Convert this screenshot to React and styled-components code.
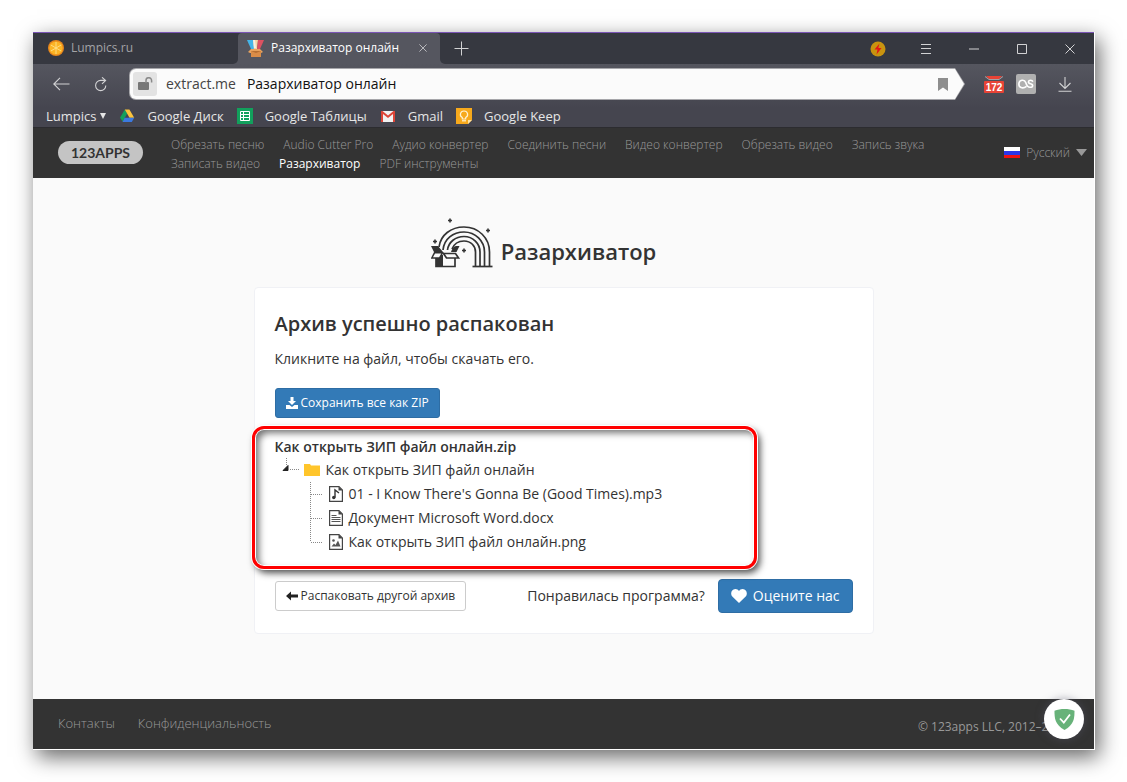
import React from "react";
import styled, { createGlobalStyle } from "styled-components";

const GlobalStyle = createGlobalStyle`
  *, *::before, *::after { box-sizing: border-box; }
  body {
    margin: 0;
    background: #fff;
    color: #333;
    font-family: "Open Sans", "Noto Sans", sans-serif;
    font-size: 14px;
    line-height: 20px;
  }
  button, input { font: inherit; color: inherit; }
  h1, h2, p, ul { margin: 0; padding: 0; }
  ul { list-style: none; }
  a { color: inherit; text-decoration: none; }
  svg { display: block; flex: none; }
`;

const Desktop = styled.div`
  display: flex;
  min-height: 100vh;
  padding: 32px 32px 32px 33px;
`;

const BrowserWindow = styled.div`
  flex: 1;
  min-width: 0;
  display: flex;
  flex-direction: column;
  background: #fafafa;
  border: solid #fff;
  border-width: 0 1px 1px 0;
  box-shadow: 4px 7px 20px rgba(0, 0, 0, 0.6);
`;

/* Browser chrome */

const TabStrip = styled.div`
  display: flex;
  height: 32px;
  background: linear-gradient(#363840 50%, #55565f 50%);
  border-top: 1px solid #7a55b5;
`;

const Tab = styled.div`
  display: flex;
  align-items: center;
  gap: 7px;
  width: ${(p) => (p.$active ? "202px" : "205px")};
  padding: 0 9px 1px ${(p) => (p.$active ? "9px" : "15px")};
  border-radius: ${(p) => (p.$active ? "4px 4px 0 0" : "0 0 5px 0")};
  background: ${(p) => (p.$active ? "#55565f" : "#363840")};
  color: ${(p) => (p.$active ? "#fff" : "#a3a3a6")};
  font-size: 12px;
  font-weight: ${(p) => (p.$active ? 500 : 400)};
  white-space: nowrap;
`;

const TabTitle = styled.span`
  flex: 1;
`;

const StripRest = styled.div`
  flex: 1;
  display: flex;
  justify-content: space-between;
  background: #363840;
  border-radius: 0 0 0 5px;
`;

const ChromeButton = styled.button`
  display: flex;
  align-items: center;
  justify-content: center;
  width: ${(p) => p.$width || 40}px;
  padding: 0;
  border: 0;
  background: none;
  color: #d2d2d4;
`;

const WindowControls = styled.div`
  display: flex;
`;

const ChromeBody = styled.div`
  background: linear-gradient(#55565f, #45454f 70%);
  border-bottom: 1px solid #2c2c30;
`;

const Toolbar = styled.div`
  display: flex;
  align-items: center;
  height: 40px;
  padding-left: 8px;
`;

const AddressFrame = styled.div`
  flex: 1;
  height: 32px;
  margin: 0 9px 0 8px;
  padding: 1px;
  background: #a6a6aa;
  border-radius: 7px;
  clip-path: polygon(0 0, calc(100% - 10px) 0, 100% 50%, calc(100% - 10px) 100%, 0 100%);
`;

const AddressField = styled.div`
  display: flex;
  align-items: center;
  height: 100%;
  padding: 0 16px 0 3px;
  background: #fbfbfb;
  border-radius: 6px;
  clip-path: polygon(0 0, calc(100% - 9px) 0, 100% 50%, calc(100% - 9px) 100%, 0 100%);
  font-size: 14px;
`;

const LockButton = styled.button`
  display: flex;
  align-items: center;
  justify-content: center;
  width: 24px;
  height: 24px;
  padding: 0;
  border: 0;
  border-radius: 3px;
  background: #e3e3e3;
`;

const Host = styled.label`
  margin: 0 11px 0 9px;
  color: #444;
`;

const AddressInput = styled.input`
  flex: 1;
  min-width: 0;
  padding: 0;
  border: 0;
  outline: 0;
  background: none;
  color: #111;
`;

const BareButton = styled.button`
  padding: 0;
  border: 0;
  background: none;
`;

const Extensions = styled.div`
  display: flex;
  align-items: center;
  gap: 12px;
  margin-left: 10px;
`;

const Bookmarks = styled.nav`
  display: flex;
  align-items: center;
  gap: 13px;
  height: 23px;
  padding: 0 13px;
  color: #e6e6e6;
  font-size: 13px;
  white-space: nowrap;
`;

const Bookmark = styled.a`
  display: flex;
  align-items: center;
  gap: ${(p) => p.$gap || 12}px;
`;

/* Site */

const SiteHeader = styled.header`
  display: flex;
  align-items: center;
  height: 50px;
  padding: 0 7px 2px 25px;
  background: #333;
  color: #999;
  font-size: 12px;
  line-height: 19px;
`;

const Brand = styled.a`
  flex: none;
  width: 85px;
  height: 23px;
  margin-right: 28px;
  border-radius: 12px;
  background: #c4c4c4;
  color: #333;
  font: 700 14px/23px Lato, sans-serif;
  text-align: center;
`;

const MainNav = styled.nav`
  flex: 1;
  display: flex;
  flex-wrap: wrap;
  column-gap: 19px;
  padding-top: 3px;
`;

const NavLink = styled.a`
  color: ${(p) => (p.$active ? "#fff" : "inherit")};
  font-weight: ${(p) => (p.$active ? 400 : 300)};
`;

const LanguageButton = styled.button`
  display: flex;
  align-items: center;
  gap: 6px;
  padding: 0;
  border: 0;
  background: none;
  font-weight: 300;
`;

const Main = styled.main`
  flex: 1;
  padding: 40px 32px 64px;
`;

const Column = styled.div`
  max-width: 620px;
  margin: 0 auto;
`;

const PageTitle = styled.div`
  display: flex;
  align-items: flex-end;
  justify-content: center;
  gap: 8px;
  padding: 0 40px 19px 0;

  h1 {
    font-size: 22px;
    line-height: 34px;
    font-weight: 600;
  }
`;

const Card = styled.section`
  padding: 21px 20px 20px;
  background: #fff;
  border: 1px solid #f0f1f5;
  border-radius: 4px;
`;

const CardTitle = styled.h2`
  font-size: 20px;
  line-height: 30px;
  font-weight: 600;
`;

const Hint = styled.p`
  margin: 10px 0 19px;
`;

const Button = styled.button`
  display: inline-flex;
  align-items: center;
  gap: ${(p) => (p.$large ? 6 : 3)}px;
  height: ${(p) => (p.$large ? 34 : 30)}px;
  padding: 0 ${(p) => (p.$large ? 12 : 10)}px;
  border: 1px solid ${(p) => (p.$primary ? "#2e6da4" : "#ccc")};
  border-radius: ${(p) => (p.$large ? 4 : 3)}px;
  background: ${(p) => (p.$primary ? "#337ab7" : "#fff")};
  color: ${(p) => (p.$primary ? "#fff" : "#333")};
  font-size: ${(p) => (p.$large ? 14 : 12)}px;
  white-space: nowrap;
`;

const Results = styled.div`
  position: relative;
  margin: 19px 0 25px;
`;

const Highlight = styled.div`
  position: absolute;
  top: -11px;
  left: -23px;
  right: 96px;
  bottom: -15px;
  border: 3px solid #f00;
  border-radius: 12px;
  box-shadow: 0 0 0 1px #fff, 3px 4px 7px rgba(0, 0, 0, 0.7), inset 0 0 0 1px #fff,
    inset 4px 4px 7px rgba(0, 0, 0, 0.55);
  pointer-events: none;
`;

const ArchiveName = styled.p`
  padding-bottom: 1px;
  font-weight: 600;
`;

const TreeRow = styled.li`
  display: flex;
  align-items: center;
  height: 24px;
  padding-left: ${(p) => (p.$depth ? 35 : 7)}px;
`;

const TreeLabel = styled.a`
  display: flex;
  align-items: center;
  gap: 6px;
`;

const CardFooter = styled.div`
  display: flex;
  align-items: center;
  justify-content: space-between;
`;

const RateBlock = styled.div`
  display: flex;
  align-items: center;
  gap: 13px;
`;

const SiteFooter = styled.footer`
  position: relative;
  display: flex;
  align-items: center;
  gap: 23px;
  height: 50px;
  padding: 0 25px 2px;
  background: #333;
  color: #999;
  font-size: 12px;
`;

const FooterLink = styled.a`
  font-size: 13px;
  font-weight: 300;
`;

const Copyright = styled.span`
  margin-left: auto;
  padding-top: 8px;
`;

const GuardBadge = styled.button`
  position: absolute;
  top: 0;
  right: 10px;
  display: flex;
  align-items: center;
  justify-content: center;
  width: 40px;
  height: 40px;
  padding: 0;
  border: 0;
  border-radius: 50%;
  background: #fff;
  box-shadow: 0 0 8px rgba(90, 90, 110, 0.5);
`;

/* Drawings */

const OrangeIcon = () => (
  <svg width="16" height="16" viewBox="0 0 16 16">
    <circle cx="8" cy="8" r="8" fill="#e8871c" />
    <circle cx="8" cy="8" r="6.6" fill="#fcb424" />
    <path d="M8 2v12M2.8 5l10.4 6M2.8 11l10.4-6" stroke="#ffe08a" strokeWidth="0.9" />
  </svg>
);

const ExtractFavicon = () => (
  <svg width="17" height="17" viewBox="0 0 17 17">
    <path d="M0 0h6l2 10-4-1Z" fill="#45b5e8" />
    <path d="M6 0h5l-1 10H7Z" fill="#f5d7a6" />
    <path d="M11 0h6l-4 9-3 1Z" fill="#dd5261" />
    <path d="M6 0h2l1 8H7Z" fill="#f5f1e4" />
    <path d="M1 12 4 9h9l3 3-2 1H3Z" fill="#e8a35f" />
    <path d="M4 11h10v6H4Z" fill="#d98c48" />
    <path d="M4 11h10l-5 2Z" fill="#b56e33" />
  </svg>
);

const CloseIcon = ({ size = 10 }) => (
  <svg width={size} height={size} viewBox="0 0 10 10" stroke="currentColor" fill="none">
    <path d="m.5.5 9 9m0-9-9 9" strokeWidth="1" />
  </svg>
);

const PlusIcon = () => (
  <svg width="15" height="15" viewBox="0 0 15 15">
    <path d="M7.5.5v14M.5 7.5h14" stroke="currentColor" />
  </svg>
);

const BoltIcon = () => (
  <svg width="16" height="16" viewBox="0 0 16 16">
    <circle cx="8" cy="8" r="7.5" fill="#c9930f" />
    <path d="m9.5 2.5-5 6h3l-1 5 5-6.5H8.3Z" fill="#e31616" />
  </svg>
);

const MenuIcon = () => (
  <svg width="10" height="10" viewBox="0 0 10 10">
    <path d="M0 .5h10M0 4.500h10M0 9.500h10" stroke="currentColor" />
  </svg>
);

const MinimizeIcon = () => (
  <svg width="10" height="10" viewBox="0 0 10 10">
    <path d="M0 5h10" stroke="currentColor" />
  </svg>
);

const MaximizeIcon = () => (
  <svg width="10" height="10" viewBox="0 0 10 10">
    <path d="M.5.5h9v9h-9Z" fill="none" stroke="currentColor" />
  </svg>
);

const BackIcon = () => (
  <svg width="17" height="14" viewBox="0 0 17 14" fill="none" stroke="currentColor" strokeWidth="1.1">
    <path d="M16.500 7H1M7 .8.800 7 7 13.200" />
  </svg>
);

const ReloadIcon = () => (
  <svg width="12" height="15" viewBox="0 0 12 15" fill="none" stroke="currentColor" strokeWidth="1.1">
    <path d="M10.800 8.500A5.100 5.100 0 1 1 5.700 3.400h4.800M7 .3l3.600 3.100L7 6.800" />
  </svg>
);

const LockIcon = () => (
  <svg width="15" height="14" viewBox="0 0 15 14">
    <path d="M1 5h9q1 0 1 1v6q0 1-1 1H1q-1 0-1-1V6q0-1 1-1Z" fill="#777" />
    <path d="M8 6V3.500a2.800 2.800 0 0 1 5.600 0V5.500" fill="none" stroke="#8a8a8a" strokeWidth="1.500" />
  </svg>
);

const BookmarkFlagIcon = () => (
  <svg width="10" height="13" viewBox="0 0 10 13">
    <path d="M0 0h10v13L5 9.500 0 13Z" fill="#8e8e8e" />
  </svg>
);

const CounterIcon = () => (
  <svg width="20" height="18" viewBox="0 0 20 18">
    <path d="M2 1h16l-3 3H5Z" fill="#e84336" />
    <path d="M1 1.500 5 4.500h10l4-3" fill="none" stroke="#b9b9bd" strokeWidth="0.8" />
    <path d="M0 7q0-1 1-1h18q1 0 1 1v10q0 1-1 1H1q-1 0-1-1Z" fill="#e84336" />
    <text x="10" y="16" textAnchor="middle" fill="#fff" fontFamily="Liberation Sans, sans-serif" fontSize="10" fontWeight="700">172</text>
  </svg>
);

const ScrobblerIcon = () => (
  <svg width="20" height="20" viewBox="0 0 20 20">
    <rect width="20" height="20" rx="2" fill="#b0b0b0" />
    <path d="M10.500 12.300c-4 3.200-8 .9-7.600-2.700C3.300 5.800 8.500 5 9.700 8.500c1.200 3.800 2 4.800 4.200 4.800 3.300 0 3.700-2.900.6-3.600-3-.6-2.500-3.500.1-3.500 1.200 0 1.900.5 2.200 1.500" fill="none" stroke="#fff" strokeWidth="1.6" />
  </svg>
);

const DownloadIcon = () => (
  <svg width="14" height="15" viewBox="0 0 14 15" fill="none" stroke="currentColor" strokeWidth="1.1">
    <path d="M7 0v11M1.500 6 7 11.500 12.500 6M.5 14.300h13" />
  </svg>
);

const DriveIcon = () => (
  <svg width="16" height="16" viewBox="0 0 16 16">
    <path d="m5.800 1.500 2.400 4-4.500 8L1 9.800Z" fill="#12a05c" />
    <path d="M5.800 1.500h4.600l4.800 8.300h-4.700Z" fill="#fcc43d" />
    <path d="M5.600 9.800h9.600l-2.400 4.200H3.500Z" fill="#3b79e0" />
  </svg>
);

const SheetsIcon = () => (
  <svg width="16" height="16" viewBox="0 0 16 16">
    <path d="M0 0h16v16H0Z" fill="#12a05c" />
    <path d="M3.500 3.500h9v9h-9ZM3.500 6.500h9M3.500 9.500h9M6.500 3.500v9" fill="none" stroke="#fff" />
  </svg>
);

const GmailIcon = () => (
  <svg width="16" height="16" viewBox="0 0 16 16">
    <path d="M1 3h14v11H1Z" fill="#f1f1f1" />
    <path d="M1 3v11h2V6l5 4 5-4v8h2V3h-1.500L8 7.500 2.500 3Z" fill="#dc4437" />
  </svg>
);

const KeepIcon = () => (
  <svg width="16" height="16" viewBox="0 0 16 16">
    <path d="M0 0h16v12l-4 4H0Z" fill="#f7a91c" />
    <path d="m12 16 4-4h-4Z" fill="#ffe2a1" />
    <path d="M6.300 9.500C3 7.700 4.200 3 8 3s5 4.700 1.700 6.500V11H6.300Z" fill="none" stroke="#fff3d4" strokeWidth="1.2" />
    <path d="M6 12.800h4" stroke="#fff3d4" strokeWidth="1.2" />
  </svg>
);

const DownTriangle = ({ width, height }) => (
  <svg width={width} height={height} viewBox="0 0 10 7" preserveAspectRatio="none">
    <path d="M0 0h10L5 7Z" fill="currentColor" />
  </svg>
);

const RussianFlag = () => (
  <svg width="16" height="11" viewBox="0 0 16 11">
    <path d="M0 0h16v4H0Z" fill="#fff" />
    <path d="M0 4h16v4H0Z" fill="#2b36e8" />
    <path d="M0 8h16v3H0Z" fill="#f01212" />
  </svg>
);

const RainbowBox = () => (
  <svg width="62" height="50" viewBox="0 0 62 50">
    <g fill="none" stroke="#333" strokeWidth="1.7">
      <path d="M8 29C9.500 17 20 9 33 9 47.500 9 58.500 20 58.500 34v14.500" />
      <path d="M12 32C13 21 22 14 33 14c11.500 0 20.500 9 20.500 20v14.500" />
      <path d="M16.500 32c1-8 8-13.500 16.500-13.500 9 0 16 7 16 15.500v14.500" />
      <path d="M21 31C23 26 27 23 33 23 40 23 44.500 28 44.500 34v14.500" />
      <path d="M41.500 48.500h20" />
      <path d="M5 38v10.500h19V39.500" />
      <path d="M12.500 35.500h12l3 4.500H15.500Z" fill="#fafafa" />
    </g>
    <path d="M0 28h7l5 6H3ZM20 34c1-3 3-6 5-6h3.500l-3 6ZM5 37h7v12H5Z" fill="#333" />
    <path d="M3.500 34.800h8L8.500 40H.8Z" fill="#fafafa" stroke="#333" strokeWidth="1.5" />
    <path d="M19 .5v4M17 2.500h4M57 10.500v4M55 12.500h4M4 21.500v4M2 23.500h4M33 30.500v4M31 32.500h4" stroke="#333" strokeWidth="1.6" />
  </svg>
);

const SaveIcon = () => (
  <svg width="12" height="12" viewBox="0 0 12 12" fill="#fff">
    <path d="M4.500 0h3v4H10L6 8 2 4h2.500Z" />
    <path d="M0 8h3.500L6 10l2.500-2H12v4H0Z" />
  </svg>
);

const LeftArrow = () => (
  <svg width="12" height="10" viewBox="0 0 12 10" fill="#222">
    <path d="M0 5 5 .5v3h7v3H5v3Z" />
  </svg>
);

const HeartIcon = () => (
  <svg width="16" height="14" viewBox="0 0 16 14">
    <path d="M8 14 1.300 7.600C-1 5 .3 0 4.300 0 6 0 7.300.8 8 2.100 8.700.8 10 0 11.700 0c4 0 5.300 5 3 7.600Z" fill="#fff" />
  </svg>
);

const RootBranch = () => (
  <svg width="22" height="24" viewBox="0 0 22 24">
    <path d="M4.500 0v8M8 11.500h9" fill="none" stroke="#888" strokeDasharray="1 1" />
    <path d="M1 12.500h5v-5Z" fill="#222" stroke="#222" />
  </svg>
);

const Branch = ({ last }) => (
  <svg width="19" height="24" viewBox="0 0 19 24">
    <path d={last ? "M.5 0v12M1 12.500h12" : "M.5 0v24M1 12.500h12"} fill="none" stroke="#888" strokeDasharray="1 1" />
  </svg>
);

const FolderIcon = () => (
  <svg width="16" height="12" viewBox="0 0 16 12">
    <path d="M0 0h6l1 1.500h9V12H0Z" fill="#ffc52b" />
  </svg>
);

const glyphs = {
  audio: <path d="M6 11.500V4l4 3" fill="none" stroke="#333" strokeWidth="1.4" />,
  text: <path d="M2.500 5.500h5M2.500 7.500h9M2.500 9.500h9M2.500 11.500h9" stroke="#555" />,
  image: <path d="M2.500 12.500 5 9.500l1.500 1.500L9 6.500l2.500 6Z" fill="#555" />,
};

const FileIcon = ({ kind }) => (
  <svg width="14" height="16" viewBox="0 0 14 16">
    <path d="M.6.600h9.400l3.400 3.400v11.400H.6Z" fill="#fff" stroke="#444" strokeWidth="1.2" />
    <path d="M9.500.600V4.500h4Z" fill="#444" />
    {glyphs[kind]}
    {kind === "audio" && <circle cx="4.800" cy="11.500" r="1.700" fill="#333" />}
    {kind === "image" && <circle cx="4.500" cy="6.500" r="1.300" fill="#555" />}
  </svg>
);

const ShieldIcon = () => (
  <svg width="21" height="21" viewBox="0 0 21 21">
    <path d="M10.500 0c3.500 0 7 .6 10 1.800 0 8-.5 13.700-10 19.200C1 15.500.5 9.800.5 1.800 3.500.6 7 0 10.500 0Z" fill="#67b279" />
    <path d="m6 9.500 3.800 4L16 5.500" fill="none" stroke="#fff" strokeWidth="1.8" />
  </svg>
);

const bookmarks = [
  { name: "Google Диск", Icon: DriveIcon },
  { name: "Google Таблицы", Icon: SheetsIcon },
  { name: "Gmail", Icon: GmailIcon },
  { name: "Google Keep", Icon: KeepIcon },
];

const tools = [
  "Обрезать песню",
  "Audio Cutter Pro",
  "Аудио конвертер",
  "Соединить песни",
  "Видео конвертер",
  "Обрезать видео",
  "Запись звука",
  "Записать видео",
  "Разархиватор",
  "PDF инструменты",
];

const files = [
  { name: "01 - I Know There's Gonna Be (Good Times).mp3", kind: "audio" },
  { name: "Документ Microsoft Word.docx", kind: "text" },
  { name: "Как открыть ЗИП файл онлайн.png", kind: "image" },
];

export default function App() {
  return (
    <Desktop>
      <GlobalStyle />
      <BrowserWindow>
        <TabStrip>
          <Tab>
            <OrangeIcon />
            <TabTitle>Lumpics.ru</TabTitle>
          </Tab>
          <Tab $active>
            <ExtractFavicon />
            <TabTitle>Разархиватор онлайн</TabTitle>
            <ChromeButton $width={16} aria-label="Закрыть вкладку">
              <CloseIcon size={8} />
            </ChromeButton>
          </Tab>
          <StripRest>
            <ChromeButton $width={42} aria-label="Новая вкладка">
              <PlusIcon />
            </ChromeButton>
            <WindowControls>
              <ChromeButton $width={48} aria-label="Турбо"><BoltIcon /></ChromeButton>
              <ChromeButton $width={48} aria-label="Меню"><MenuIcon /></ChromeButton>
              <ChromeButton $width={48} aria-label="Свернуть"><MinimizeIcon /></ChromeButton>
              <ChromeButton $width={48} aria-label="Развернуть"><MaximizeIcon /></ChromeButton>
              <ChromeButton $width={48} aria-label="Закрыть"><CloseIcon /></ChromeButton>
            </WindowControls>
          </StripRest>
        </TabStrip>

        <ChromeBody>
          <Toolbar>
            <ChromeButton aria-label="Назад"><BackIcon /></ChromeButton>
            <ChromeButton aria-label="Обновить"><ReloadIcon /></ChromeButton>
            <AddressFrame>
              <AddressField>
                <LockButton aria-label="Сведения о сайте"><LockIcon /></LockButton>
                <Host htmlFor="address">extract.me</Host>
                <AddressInput id="address" defaultValue="Разархиватор онлайн" />
                <BareButton aria-label="В закладки"><BookmarkFlagIcon /></BareButton>
              </AddressField>
            </AddressFrame>
            <Extensions>
              <BareButton aria-label="Почта"><CounterIcon /></BareButton>
              <BareButton aria-label="Скробблер"><ScrobblerIcon /></BareButton>
            </Extensions>
            <ChromeButton $width={58} aria-label="Загрузки"><DownloadIcon /></ChromeButton>
          </Toolbar>
          <Bookmarks>
            <Bookmark href="#" $gap={4}>
              Lumpics <DownTriangle width={6} height={6} />
            </Bookmark>
            {bookmarks.map(({ name, Icon }) => (
              <Bookmark href="#" key={name}>
                <Icon />
                {name}
              </Bookmark>
            ))}
          </Bookmarks>
        </ChromeBody>

        <SiteHeader>
          <Brand href="#">123APPS</Brand>
          <MainNav>
            {tools.map((tool) => (
              <NavLink href="#" key={tool} $active={tool === "Разархиватор"}>{tool}</NavLink>
            ))}
          </MainNav>
          <LanguageButton>
            <RussianFlag />
            Русский
            <DownTriangle width={11} height={7} />
          </LanguageButton>
        </SiteHeader>

        <Main>
          <Column>
            <PageTitle>
              <RainbowBox />
              <h1>Разархиватор</h1>
            </PageTitle>
            <Card>
              <CardTitle>Архив успешно распакован</CardTitle>
              <Hint>Кликните на файл, чтобы скачать его.</Hint>
              <Button $primary>
                <SaveIcon />
                Сохранить все как ZIP
              </Button>
              <Results>
                <ArchiveName>Как открыть ЗИП файл онлайн.zip</ArchiveName>
                <ul>
                  <TreeRow>
                    <RootBranch />
                    <TreeLabel href="#">
                      <FolderIcon />
                      Как открыть ЗИП файл онлайн
                    </TreeLabel>
                  </TreeRow>
                  {files.map((file, i) => (
                    <TreeRow key={file.name} $depth={1}>
                      <Branch last={i === files.length - 1} />
                      <TreeLabel href="#">
                        <FileIcon kind={file.kind} />
                        {file.name}
                      </TreeLabel>
                    </TreeRow>
                  ))}
                </ul>
                <Highlight />
              </Results>
              <CardFooter>
                <Button>
                  <LeftArrow />
                  Распаковать другой архив
                </Button>
                <RateBlock>
                  <span>Понравилась программа?</span>
                  <Button $primary $large>
                    <HeartIcon />
                    Оцените нас
                  </Button>
                </RateBlock>
              </CardFooter>
            </Card>
          </Column>
        </Main>

        <SiteFooter>
          <FooterLink href="#">Контакты</FooterLink>
          <FooterLink href="#">Конфиденциальность</FooterLink>
          <Copyright>© 123apps LLC, 2012–2018</Copyright>
          <GuardBadge aria-label="Защита"><ShieldIcon /></GuardBadge>
        </SiteFooter>
      </BrowserWindow>
    </Desktop>
  );
}
